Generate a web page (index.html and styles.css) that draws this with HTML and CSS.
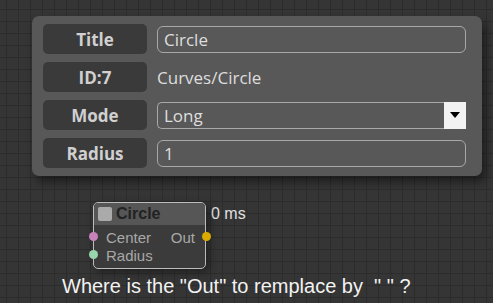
FILE: index.html
```html
<!DOCTYPE html>
<html>
<head>
<meta charset="utf-8">
<link rel="stylesheet" href="styles.css">
</head>
<body>
<div class="panel">
  <div class="row">
    <div class="label">Title</div>
    <div class="field input">Circle</div>
  </div>
  <div class="row">
    <div class="label">ID:7</div>
    <div class="field plain">Curves/Circle</div>
  </div>
  <div class="row">
    <div class="label">Mode</div>
    <div class="field select">
      <span class="select-text">Long</span>
      <span class="select-btn"><svg width="10" height="6" viewBox="0 0 10 6"><path d="M0 0 L10 0 L5 6 Z" fill="#000"/></svg></span>
    </div>
  </div>
  <div class="row">
    <div class="label">Radius</div>
    <div class="field input">1</div>
  </div>
</div>

<div class="node-area">
  <div class="node">
    <div class="node-title"><span class="box"></span><span class="node-name">Circle</span></div>
    <div class="node-body">
      <div class="slot"><span class="port pink"></span><span class="slot-name">Center</span><span class="out-name">Out</span><span class="port yellow"></span></div>
      <div class="slot"><span class="port green"></span><span class="slot-name">Radius</span></div>
    </div>
  </div>
  <div class="time">0 ms</div>
</div>

<div class="question">Where is the "Out" to remplace by &nbsp;" " ?</div>
</body>
</html>
```

FILE: styles.css
```css
html, body {
  margin: 0;
  padding: 0;
}
body {
  width: 493px;
  height: 303px;
  overflow: hidden;
  background-color: #353535;
  background-image:
    linear-gradient(to right, #2c2c2c 1px, transparent 1px),
    linear-gradient(to bottom, #2c2c2c 1px, transparent 1px);
  background-size: 12px 12px;
  background-position: 6px 9px;
  display: flex;
  flex-direction: column;
  align-items: flex-start;
  font-family: "Open Sans", sans-serif;
}
.panel {
  margin: 16px 0 0 32px;
  width: 450px;
  box-sizing: border-box;
  padding: 8px 16px 8px 11px;
  background: #585858;
  border-radius: 7px;
  box-shadow: 4px 6px 10px rgba(0,0,0,0.45);
  display: flex;
  flex-direction: column;
  gap: 8px;
}
.row {
  display: flex;
  align-items: center;
  gap: 10px;
  height: 30px;
}
.label {
  width: 104px;
  height: 30px;
  flex: none;
  background: #3a3a3a;
  border-radius: 5px;
  color: #d0d0d0;
  font-weight: 700;
  font-size: 17px;
  display: flex;
  align-items: center;
  justify-content: center;
}
.field {
  width: 310px;
  height: 27px;
  box-sizing: border-box;
  color: #dedede;
  font-size: 17px;
  display: flex;
  align-items: center;
}
.input {
  border: 1px solid #a8a8a8;
  border-radius: 6px;
  padding-left: 6px;
}
.plain {
  padding-left: 0;
}
.select {
  border: 1px solid #a8a8a8;
  border-radius: 5px 0 0 5px;
  border-right: none;
  justify-content: space-between;
}
.select-text {
  padding-left: 6px;
}
.select-btn {
  width: 22px;
  height: 27px;
  background: #f2f2f2;
  display: flex;
  align-items: center;
  justify-content: center;
}
.node-area {
  margin: 26px 0 0 93px;
  display: flex;
  align-items: flex-start;
  gap: 5px;
  font-family: "Liberation Sans", Arial, sans-serif;
}
.node {
  width: 113px;
  height: 67px;
  box-sizing: border-box;
  border: 1px solid #bcbcbc;
  border-radius: 5px;
  background: #3b3b3b;
  box-shadow: 3px 3px 8px rgba(0,0,0,0.4);
  position: relative;
}
.node-title {
  height: 22px;
  background: #565656;
  border-radius: 4px 4px 0 0;
  display: flex;
  align-items: center;
  gap: 4px;
  padding-left: 4px;
}
.box {
  width: 14px;
  height: 14px;
  background: #aaa;
  border-radius: 2px;
}
.node-name {
  font-weight: 700;
  font-size: 16px;
  color: #222;
}
.node-body {
  padding-top: 3px;
}
.slot {
  height: 18px;
  display: flex;
  align-items: center;
  position: relative;
  font-size: 15px;
  color: #a8a8a8;
}
.slot-name {
  padding-left: 12px;
}
.out-name {
  margin-left: auto;
  padding-right: 10px;
}
.port {
  position: absolute;
  width: 9px;
  height: 9px;
  border-radius: 50%;
  top: 4px;
}
.pink { left: -5px; background: #c783b9; }
.green { left: -5px; background: #98d4ac; }
.yellow { right: -6px; background: #d9ab00; }
.time {
  margin-top: 3px;
  font-size: 16px;
  color: #e0e0e0;
}
.question {
  margin: 6px 0 0 62px;
  font-family: "Liberation Sans", Arial, sans-serif;
  font-size: 20px;
  line-height: 23px;
  color: #f2f2f2;
  white-space: pre;
}
```
